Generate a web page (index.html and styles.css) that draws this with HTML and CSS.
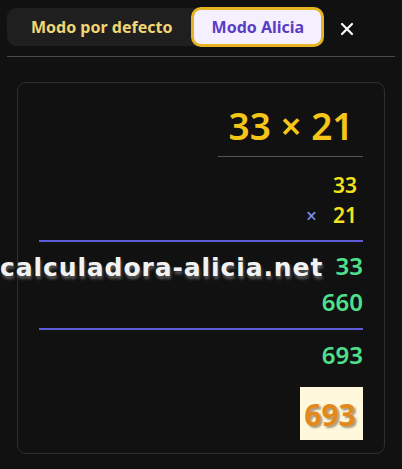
FILE: index.html
```html
<!DOCTYPE html>
<html lang="es">
<head>
<meta charset="utf-8">
<title>Modo Alicia</title>
<link rel="stylesheet" href="styles.css">
</head>
<body>
<div class="top">
  <div class="seg">
    <button class="opt">Modo por defecto</button>
    <button class="opt active">Modo Alicia</button>
  </div>
  <button class="close" aria-label="Cerrar">
    <svg width="14" height="14" viewBox="0 0 14 14"><path d="M2 2 L12 12 M12 2 L2 12" stroke="#ffffff" stroke-width="2.2" stroke-linecap="round"/></svg>
  </button>
</div>
<div class="divider"></div>
<div class="card">
  <div class="title-wrap"><div class="title">33 × 21</div></div>
  <div class="row yellow">33</div>
  <div class="row yellow"><span class="op">×</span>21</div>
  <div class="rule r1"></div>
  <div class="row green first">33</div>
  <div class="row green">660</div>
  <div class="rule r2"></div>
  <div class="row green total">693</div>
  <div class="result"><span>693</span></div>
  <div class="watermark">calculadora-alicia.net</div>
</div>
</body>
</html>
```

FILE: styles.css
```css
* { box-sizing: border-box; }
html, body { margin: 0; padding: 0; }
body {
  background: #111111;
  font-family: "Noto Sans", "DejaVu Sans", sans-serif;
  width: 402px;
  height: 469px;
  overflow: hidden;
  position: relative;
}
.top {
  display: flex;
  align-items: center;
  padding: 6px 7px 0 7px;
  height: 47px;
}
.seg {
  display: flex;
  align-items: center;
  background: #1f1f1f;
  border-radius: 9px;
  height: 38px;
}
.opt {
  border: 0;
  background: transparent;
  font-family: inherit;
  font-weight: 700;
  font-size: 16px;
  color: #f2d675;
  padding: 0 19px 0 24px;
  height: 38px;
  cursor: pointer;
}
.opt.active {
  background: #f4f0ff;
  color: #5b3cc4;
  border: 3px solid #e6b422;
  border-radius: 10px;
  height: 40px;
  width: 133px;
  padding: 0;
}
.close {
  border: 0;
  background: transparent;
  margin-left: 15px;
  padding: 0;
  width: 16px;
  height: 16px;
  display: flex;
  align-items: center;
  justify-content: center;
  margin-top: 4px;
}
.divider {
  height: 1px;
  background: #4a4a4a;
  margin: 9px 7px 0 7px;
}
.card {
  margin: 25px 17px 0 17px;
  height: 372px;
  border: 1px solid #2e2e2e;
  border-radius: 9px;
  background: #111111;
  padding: 21px 21px 0 21px;
  display: flex;
  flex-direction: column;
  align-items: flex-end;
}
.title-wrap {
  width: 145px;
  border-bottom: 1px solid #555555;
  padding-bottom: 8px;
  display: flex;
  justify-content: center;
}
.title {
  font-size: 37px;
  line-height: 44px;
  font-weight: 600;
  color: #f5c518;
  padding-left: 1px;
}
.row {
  font-size: 21px;
  font-weight: 600;
  line-height: 30px;
  text-align: right;
}
.yellow { color: #f3e21c; padding-right: 6px; }
.title-wrap + .row { margin-top: 13px; }
.op {
  color: #7f8ff0;
  font-size: 19px;
  font-weight: 500;
  margin-right: 16px;
}
.rule {
  align-self: stretch;
  height: 2px;
  background: #5d5cd6;
}
.r1 { margin-top: 9px; }
.r2 { margin-top: 8px; }
.green {
  color: #4fe08e;
  line-height: 36px;
  font-size: 24px;
}
.green.first { margin-top: 6px; }
.green.total { margin-top: 7px; }
.result {
  margin-top: 14px;
  width: 63px;
  height: 53px;
  background: #fff8dc;
  display: flex;
  align-items: center;
  justify-content: center;
}
.result span {
  font-size: 30px;
  font-weight: 700;
  color: #e3891c;
  text-shadow: 2px 2px 2px rgba(60, 40, 0, 0.45);
  padding-top: 2px;
  margin-left: -3px;
}
.watermark {
  position: absolute;
  left: 0;
  top: 254px;
  font-family: "DejaVu Sans", sans-serif;
  font-weight: 700;
  font-size: 25px;
  letter-spacing: 0.9px;
  line-height: 28px;
  color: #f2f2f2;
  text-shadow: 1px 3px 3px rgba(150, 150, 150, 0.55);
  white-space: nowrap;
}
```
